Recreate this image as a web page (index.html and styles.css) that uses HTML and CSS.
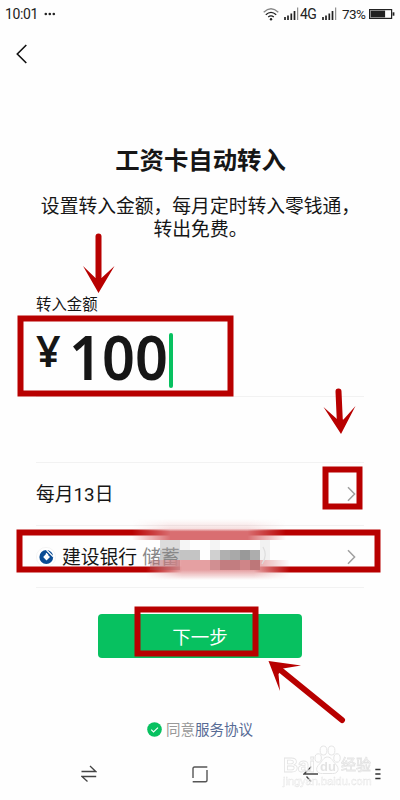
FILE: index.html
```
<!DOCTYPE html>
<html lang="zh-CN">

<head>
    <meta charset="UTF-8">
    <meta name="viewport" content="width=device-width, initial-scale=1.0">
    <title>工资卡自动转入</title>
    <link rel="stylesheet" href="styles.css">
</head>

<body>

    <!-- 状态栏 -->
    <header class="status">
        <span class="time">10:01</span>
        <svg class="dots" width="12" height="4" viewBox="0 0 12 4" fill="#222">
            <circle cx="1.8" cy="2" r="1.3" />
            <circle cx="5.8" cy="2" r="1.3" />
            <circle cx="9.8" cy="2" r="1.3" />
        </svg>
        <svg class="wifi" width="16" height="13" viewBox="0 0 16 13" fill="none" stroke-width="1.3">
            <path d="M.7 4.2Q8-2.6 15.3 4.2" stroke="#888" />
            <path d="M2.8 6.7Q8 2 13.2 6.7M5.2 9Q8 6.6 10.8 9" stroke="#222" />
            <circle cx="8" cy="11.2" r="1.2" fill="#222" />
        </svg>
        <svg class="signal" width="15" height="14" viewBox="0 0 15 14">
            <path d="M1 10v3M4 8.5V13M7.3 6.5V13M10.5 4v9" stroke="#222" stroke-width="1.7" />
            <path d="M13.7.5V13" stroke="#777" stroke-width="1" />
        </svg>
        <span class="net">4G</span>
        <svg class="signal second" width="15" height="14" viewBox="0 0 15 14">
            <path d="M1 10v3M4 8.5V13M7.3 6.5V13M10.5 4v9" stroke="#222" stroke-width="1.7" />
            <path d="M13.7.5V13" stroke="#777" stroke-width="1" />
        </svg>
        <span class="percent">73%</span>
        <svg class="battery" width="26" height="10" viewBox="0 0 26 10">
            <rect x=".6" y=".6" width="22" height="8.8" fill="none" stroke="#222" stroke-width="1.2" />
            <rect x="1.6" y="1.6" width="14.5" height="6.8" fill="#222" />
            <path d="M24.5 3.3v3.4" stroke="#222" stroke-width="1.8" />
        </svg>
    </header>

    <nav class="back">
        <svg width="12" height="20" viewBox="0 0 12 20" fill="none" stroke="#111" stroke-width="1.6">
            <path d="M10.3 1L1.3 10l9 9" />
        </svg>
    </nav>

    <main>
        <h1>工资卡自动转入</h1>
        <p class="desc">设置转入金额，每月定时转入零钱通，<br>转出免费。</p>

        <section class="amount">
            <label>转入金额</label>
            <div class="value">
                <span class="yen">¥</span>
                <span class="number">100</span>
                <i class="cursor"></i>
            </div>
        </section>

        <div class="row date">
            <span>每月13日</span>
            <svg class="arrow" width="9" height="16" viewBox="0 0 9 16" fill="none" stroke="#a0a0a0" stroke-width="1.5">
                <path d="M1 1.2L7.6 8 1 14.8" />
            </svg>
        </div>

        <div class="row bank">
            <svg class="logo" width="20" height="20" viewBox="0 0 20 20">
                <circle cx="10" cy="10" r="9.6" fill="#fff" stroke="#f1f1f1" stroke-width=".8" />
                <circle cx="10.3" cy="10" r="6.9" fill="#0a4c94" />
                <path d="M10.5 6.6L14 10l-3.5 3.4L7.200 10z" fill="#fff" />
                <path d="M10.500 3L17.500 10M10 6.200l2 2" stroke="#fff" stroke-width="1.100" />
            </svg>
            <span class="bank-name">建设银行</span>
            <span class="card">储蓄</span>
            <svg class="arrow" width="9" height="16" viewBox="0 0 9 16" fill="none" stroke="#a0a0a0" stroke-width="1.5">
                <path d="M1 1.2L7.6 8 1 14.8" />
            </svg>
        </div>

        <button class="next">下一步</button>

        <div class="agree">
            <svg width="15" height="15" viewBox="0 0 15 15">
                <circle cx="7.5" cy="7.5" r="7.3" fill="#07c160" />
                <path d="M4.2 7.7l2.3 2.3 4.5-4.4" fill="none" stroke="#fff" stroke-width="1.1" />
            </svg>
            <span>同意</span><a>服务协议</a>
        </div>
    </main>

    <!-- 系统导航键 -->
    <footer class="keys">
        <svg width="16" height="18" viewBox="0 0 16 18" fill="none" stroke="#444" stroke-width="1.3">
            <path d="M.5 6.5h14.2L9 1M15.2 11.5H1l5.5 5" />
        </svg>
        <svg width="16" height="17" viewBox="0 0 16 17" fill="none" stroke="#555" stroke-width="1.4">
            <path d="M1 12V2.5Q1 1 2.5 1H15.3M.7 15.7H13.5Q15 15.7 15 14.2V4" />
        </svg>
        <svg width="16" height="18" viewBox="0 0 16 18" fill="none" stroke="#444" stroke-width="1.3">
            <path d="M15 9H1L8.5 1.5M3.5 11.5L8 16.5" />
        </svg>
        <svg class="menu" width="6" height="12" viewBox="0 0 6 12" stroke="#333" stroke-width="1.3">
            <path d="M.3 1.5h5.2M.3 6h5.2M.3 10.5h5.2" />
        </svg>
    </footer>

    <!-- 水印 -->
    <div class="watermark">
        <div class="brand">
            <span class="bai">Bai</span>
            <svg width="27" height="30" viewBox="0 0 27 30" fill="#fff" stroke="#ddd" stroke-width="1">
                <ellipse cx="4.2" cy="13" rx="3.2" ry="4.2" />
                <ellipse cx="9.5" cy="5.5" rx="3.4" ry="4.5" />
                <ellipse cx="17.5" cy="5.5" rx="3.4" ry="4.5" />
                <ellipse cx="23" cy="13" rx="3.2" ry="4.2" />
                <path d="M13.5 12c4 0 5 4 8 7 5 5 2 10-3 9.5h-10C3 29 0 24 5.5 19c3-3 4-7 8-7z" />
                <text x="6" y="26">du</text>
            </svg>
            <span class="jingyan">经验</span>
        </div>
        <div class="site">jingyan.baidu.com</div>
    </div>

    <!-- 红色标注 -->
    <svg class="marks" width="400" height="800" viewBox="0 0 400 800">
        <defs>
            <linearGradient id="fade">
                <stop offset="0" stop-color="#fff" stop-opacity="0" />
                <stop offset=".25" stop-color="#fff" />
                <stop offset=".75" stop-color="#fff" />
                <stop offset="1" stop-color="#fff" stop-opacity="0" />
            </linearGradient>
            <linearGradient id="top" x2="0" y2="1">
                <stop offset="0" stop-color="#d96e71" stop-opacity="0" />
                <stop offset=".45" stop-color="#d96e71" stop-opacity=".2" />
                <stop offset=".6" stop-color="#d96e71" />
                <stop offset="1" stop-color="#d96e71" />
            </linearGradient>
            <linearGradient id="bottom" x2="0" y2="1">
                <stop offset="0" stop-color="#e5a0a2" />
                <stop offset=".5" stop-color="#e5a0a2" />
                <stop offset="1" stop-color="#e5a0a2" stop-opacity="0" />
            </linearGradient>
            <mask id="smudge-top">
                <rect x="132" y="515" width="154" height="30" fill="url(#fade)" />
            </mask>
            <mask id="smudge-bottom">
                <rect x="146" y="555" width="144" height="30" fill="url(#fade)" />
            </mask>
        </defs>
        <g fill="none" stroke="#b80000" stroke-width="6">
            <rect x="20.5" y="318.5" width="210" height="75" />
            <rect x="325.5" y="469.5" width="34" height="37" />
            <rect x="19.5" y="532.5" width="358" height="37" />
            <rect x="137.5" y="609.5" width="118" height="44" />
        </g>
        <g fill="#b80000" stroke="#b80000">
            <path d="M98.5 236.5V282" stroke-width="6" stroke-linecap="round" />
            <path d="M98.5 293L83 266l12.5 12h6l13-12z" stroke="none" />
            <path d="M338.5 391.5L340 425" stroke-width="6" stroke-linecap="round" />
            <path d="M341 434l-17.5-27 14 12.5h6L355.5 406z" stroke="none" />
            <path d="M342 720L278 668" stroke-width="6" stroke-linecap="round" />
            <path d="M268.5 661l32.5 4.5-18 3-4.5 5.5 1.5 17z" stroke="none" />
        </g>
        <g mask="url(#smudge-top)">
            <rect x="132" y="529" width="156" height="11" fill="#fff" />
            <rect x="132" y="519" width="156" height="21" fill="url(#top)" />
        </g>
        <g mask="url(#smudge-bottom)">
            <rect x="132" y="560" width="158" height="13" fill="#fff" />
            <rect x="132" y="560" width="158" height="20" fill="url(#bottom)" />
        </g>
        <!-- 马赛克 -->
        <g>
            <rect x="160" y="540" width="20" height="10" fill="#aaa" fill-opacity=".4" />
            <rect x="180" y="540" width="10" height="10" fill="#f5f5f5" />
            <rect x="160" y="550" width="20" height="10" fill="#888" fill-opacity=".45" />
            <rect x="180" y="550" width="20" height="10" fill="#c4c4c4" />
            <rect x="150" y="560" width="30" height="10" fill="#a35c60" fill-opacity=".35" />
            <rect x="210" y="540" width="10" height="10" fill="#f4f4f4" />
            <rect x="210" y="550" width="10" height="10" fill="#d0d0d0" />
            <rect x="220" y="550" width="10" height="10" fill="#b0b0b0" />
            <rect x="230" y="550" width="10" height="10" fill="#a9a9a9" />
            <rect x="240" y="550" width="10" height="10" fill="#999" />
            <rect x="250" y="550" width="10" height="10" fill="#adadad" />
            <rect x="260" y="540" width="10" height="20" fill="#f1f1f1" />
            <rect x="210" y="560" width="10" height="10" fill="#d18f92" />
            <rect x="220" y="560" width="20" height="10" fill="#c27d80" />
            <rect x="240" y="560" width="10" height="10" fill="#cf8588" />
            <rect x="250" y="560" width="10" height="10" fill="#bd7779" />
            <path d="M263 547q5 8-1 17" fill="none" stroke="#ddd" stroke-width="1.2" />
        </g>
    </svg>

</body>

</html>
```
FILE: styles.css
```
body {
    position: relative;
    display: flex;
    flex-direction: column;
    margin: 0;
    width: 400px;
    height: 800px;
    overflow: hidden;
    font-family: 'Roboto', 'Noto Sans CJK SC', sans-serif;
    background-color: #fefefe;
    color: #161616;
}

svg {
    display: block;
    flex: none;
}

.status {
    display: flex;
    align-items: center;
    height: 28px;
    padding-left: 5px;
    font-size: 14px;
    line-height: 28px;
    color: #222;
}

.time {
    width: 39px;
    letter-spacing: -0.4px;
}

.wifi {
    margin-left: 207px;
}

.signal {
    margin-left: 5px;
}

.net {
    width: 17px;
    margin-left: 1px;
    letter-spacing: -0.7px;
}

.signal.second {
    margin-left: 5px;
}

.percent {
    width: 26px;
    margin-left: 5px;
    font-size: 13.5px;
    letter-spacing: -0.6px;
}

.battery {
    margin-left: 1px;
}

.back {
    height: 45px;
    padding: 16px 0 0 16px;
    box-sizing: border-box;
}

main {
    padding: 0 36px;
}

h1 {
    margin: 70px 0 0;
    padding-left: 1px;
    font-size: 24.4px;
    line-height: 36px;
    font-weight: 700;
    text-align: center;
}

.desc {
    margin: 17px -10px 0 -9px;
    font-size: 18.8px;
    line-height: 22.5px;
    text-align: center;
}

.amount {
    height: 102px;
    margin-top: 53px;
    border-bottom: 1px solid #f2f2f2;
}

.amount label {
    display: block;
    font-size: 15.4px;
    line-height: 22px;
}

.value {
    display: flex;
    font-family: 'Noto Sans', sans-serif;
    font-weight: 600;
}

.yen {
    width: 33px;
    font-size: 43px;
    line-height: 70px;
}

.number {
    width: 100px;
    font-size: 62px;
    line-height: 80px;
    transform: scaleX(0.93);
    transform-origin: left;
}

.cursor {
    width: 4px;
    height: 55px;
    margin-top: 17px;
    border-radius: 2px;
    background-color: #07c160;
}

.row {
    display: flex;
    align-items: center;
    height: 61px;
    border-bottom: 1px solid #f2f2f2;
    font-size: 18.8px;
}

.row span {
    margin-top: -3px;
}

.date {
    height: 62px;
    margin-top: 65px;
    border-top: 1px solid #f2f2f2;
}

.arrow {
    margin-left: auto;
    margin-right: 8px;
}

.logo {
    margin-right: 6px;
}

.card {
    margin-left: 5px;
    color: #888;
}

.next {
    display: block;
    width: 204px;
    height: 44px;
    margin: 26px 0 0 62px;
    padding: 0;
    border: none;
    border-radius: 4px;
    background-color: #07c160;
    color: #fff;
    font-family: inherit;
    font-size: 18.5px;
}

.agree {
    display: flex;
    align-items: center;
    margin: 62px 0 0 111px;
    font-size: 14.5px;
    line-height: 22px;
    color: #999;
}

.agree svg {
    margin-bottom: 3px;
}

.agree span {
    margin-left: 4px;
}

.agree a {
    color: #576b95;
}

.keys {
    display: flex;
    align-items: center;
    height: 18px;
    margin: 23px 0 0 81px;
    gap: 95px;
}

.keys .menu {
    margin-left: -39px;
}

/* 水印 */
.watermark {
    position: absolute;
    left: 283px;
    top: 745px;
    color: #fff;
    font-family: 'Liberation Sans', 'Noto Sans CJK SC', sans-serif;
    -webkit-text-stroke: 0.8px #ddd;
    opacity: 0.8;
}

.brand {
    display: flex;
    align-items: flex-end;
    height: 30px;
    font-size: 21px;
    line-height: 20px;
    font-weight: 700;
}

.bai {
    width: 31px;
    letter-spacing: -0.3px;
}

.brand text {
    font-size: 13px;
    fill: #ddd;
    stroke: none;
    -webkit-text-stroke: 0;
}

.jingyan {
    font-size: 15px;
    font-weight: 400;
}

.site {
    font-size: 11px;
    line-height: 13px;
    -webkit-text-stroke: 0.4px #ddd;
}

.marks {
    position: absolute;
    left: 0;
    top: 0;
    pointer-events: none;
}
```
